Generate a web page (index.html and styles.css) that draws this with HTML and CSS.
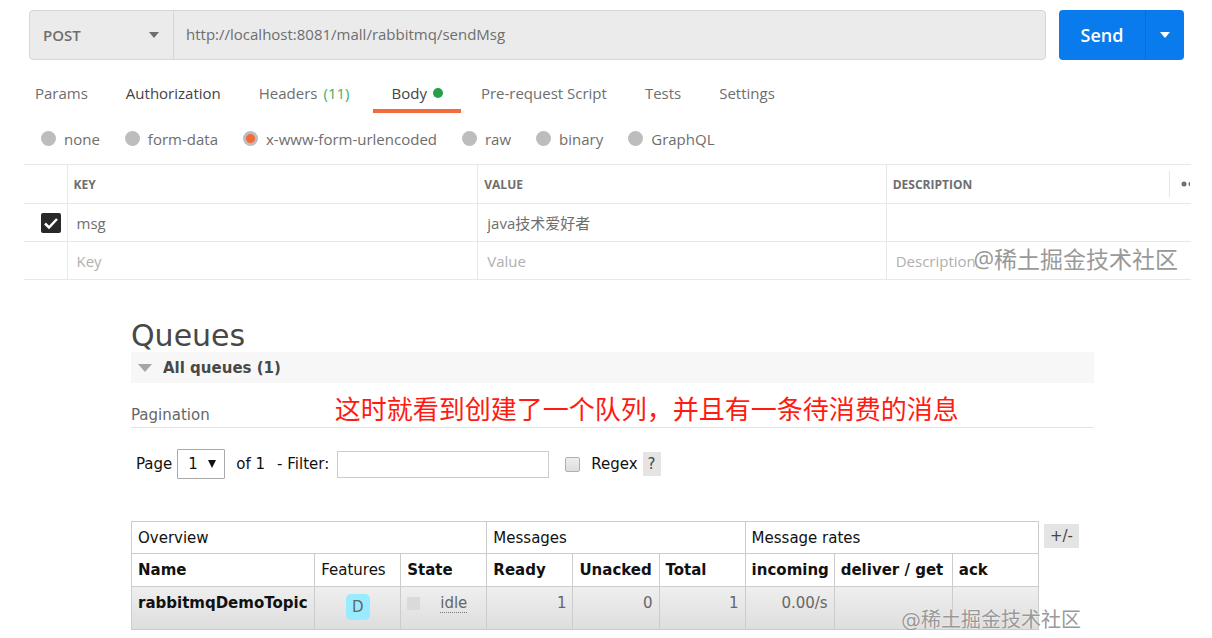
FILE: index.html
```
<!DOCTYPE html>
<html lang="zh-CN">
<head>
<meta charset="utf-8">
<title>RabbitMQ sendMsg</title>
<link rel="stylesheet" href="styles.css">
</head>
<body>
<section class="request">
  <form class="request-bar">
    <div class="request-target">
      <div class="method">
        <select class="method-select" aria-label="Method"><option>POST</option></select>
        <svg class="method-arrow" viewBox="0 0 10 6"><path d="M0 0h10L5 6z"/></svg>
      </div>
      <input class="url" type="text" aria-label="Request URL" value="http://localhost:8081/mall/rabbitmq/sendMsg">
    </div>
    <div class="send-group">
      <button class="send" type="button">Send</button>
      <button class="send-more" type="button" aria-label="Send options"><svg class="send-arrow" viewBox="0 0 10 6"><path d="M0 0h10L5 6z"/></svg></button>
    </div>
  </form>

  <nav class="tabs">
    <button class="tab" type="button">Params</button>
    <button class="tab tab-strong" type="button">Authorization</button>
    <button class="tab tab-headers" type="button">Headers <span class="count">(11)</span></button>
    <button class="tab tab-strong tab-active" type="button">Body <span class="dot"></span></button>
    <button class="tab" type="button">Pre-request Script</button>
    <button class="tab" type="button">Tests</button>
    <button class="tab" type="button">Settings</button>
  </nav>

  <div class="modes">
    <label class="mode"><input class="radio" type="radio" name="mode">none</label>
    <label class="mode"><input class="radio" type="radio" name="mode">form-data</label>
    <label class="mode"><input class="radio" type="radio" name="mode" checked>x-www-form-urlencoded</label>
    <label class="mode"><input class="radio" type="radio" name="mode">raw</label>
    <label class="mode"><input class="radio" type="radio" name="mode">binary</label>
    <label class="mode"><input class="radio" type="radio" name="mode">GraphQL</label>
  </div>

  <div class="params-wrap">
    <table class="params">
      <colgroup><col class="col-check"><col class="col-key"><col class="col-value"><col></colgroup>
      <thead>
        <tr><th></th><th>KEY</th><th>VALUE</th>
          <th><div class="description-head">DESCRIPTION<button class="more" type="button" aria-label="More"><svg class="more-dots" viewBox="0 0 9 6"><circle cx="3" cy="3" r="2.5"/><circle cx="10" cy="3" r="2.5"/></svg></button></div></th></tr>
      </thead>
      <tbody>
        <tr>
          <td class="check-cell"><span class="check"><input class="check-input" type="checkbox" aria-label="Enable msg" checked><svg class="check-mark" viewBox="0 0 20 20"><path d="M4 10.500l4 4 8-8.500"/></svg></span></td>
          <td><input class="cell" type="text" aria-label="Key" value="msg"></td>
          <td><input class="cell" type="text" aria-label="Value" value="java技术爱好者"></td>
          <td><input class="cell" type="text" aria-label="Description"></td>
        </tr>
        <tr>
          <td></td>
          <td><input class="cell" type="text" aria-label="New key" placeholder="Key"></td>
          <td><input class="cell" type="text" aria-label="New value" placeholder="Value"></td>
          <td><input class="cell" type="text" aria-label="New description" placeholder="Description"></td>
        </tr>
      </tbody>
    </table>
    <span class="watermark watermark-request">@稀土掘金技术社区</span>
  </div>
</section>

<main class="queues">
  <h1 class="title">Queues</h1>
  <h2 class="section-bar"><svg class="section-arrow" viewBox="0 0 14 8"><path d="M0 0h14L7 8z"/></svg>All queues (1)</h2>
  <div class="pagination">
    <h3 class="pagination-title">Pagination</h3>
    <p class="note">这时就看到创建了一个队列，并且有一条待消费的消息</p>
  </div>
  <form class="filter">
    <label for="page">Page</label>
    <span class="page">
      <select class="page-select" id="page"><option>1</option></select>
      <svg class="page-arrow" viewBox="0 0 8 8"><path d="M0 0h8L4 8z"/></svg>
    </span>
    <span class="page-total">of 1</span>
    <label class="filter-label" for="filter">- Filter:</label>
    <input class="filter-input" id="filter" type="text">
    <input class="regex" id="regex" type="checkbox">
    <label for="regex">Regex</label>
    <button class="chip" type="button">?</button>
  </form>
  <div class="list">
    <table class="queue-table">
      <colgroup><col class="w-name"><col class="w-std"><col class="w-std"><col class="w-std"><col class="w-std"><col class="w-std"><col class="w-in"><col class="w-get"><col class="w-std"></colgroup>
      <thead>
        <tr><th class="light group" colspan="3">Overview</th><th class="light group" colspan="3">Messages</th><th class="light group" colspan="3">Message rates</th></tr>
        <tr><th>Name</th><th class="light">Features</th><th>State</th><th>Ready</th><th>Unacked</th><th>Total</th><th>incoming</th><th>deliver / get</th><th>ack</th></tr>
      </thead>
      <tbody>
        <tr>
          <td><a class="queue-link" href="#">rabbitmqDemoTopic</a></td>
          <td class="center"><span class="durable">D</span></td>
          <td><span class="state"><span class="state-box"></span><abbr class="state-text">idle</abbr></span></td>
          <td class="num">1</td><td class="num">0</td><td class="num">1</td>
          <td class="num">0.00/s</td><td></td><td></td>
        </tr>
      </tbody>
    </table>
    <button class="chip chip-columns" type="button">+/-</button>
    <span class="watermark watermark-queues">@稀土掘金技术社区</span>
  </div>
</main>
</body>
</html>
```
FILE: styles.css
```
* { box-sizing: border-box; }

body {
  margin: 0;
  background: #fff;
  font-family: "Open Sans", "Noto Sans CJK SC", sans-serif;
  font-size: 15px;
  color: #6e6e6e;
}

button, input, select {
  font: inherit;
  color: inherit;
  margin: 0;
  padding: 0;
  border: 0;
  background: none;
  appearance: none;
  outline: 0;
}

svg { display: block; fill: currentColor; }

/* Request builder */
.request { padding: 10px 21px 0 24px; }

.request-bar {
  display: flex;
  gap: 13px;
  padding: 0 7px 0 5px;
}

.request-target {
  flex: 1;
  display: flex;
  height: 50px;
  border: 1px solid #d6d6d6;
  border-radius: 4px;
  background: #ebebeb;
}

.method {
  display: grid;
  width: 144px;
  align-items: center;
  border-right: 1px solid #d6d6d6;
}

.method-select {
  grid-area: 1 / 1;
  height: 48px;
  padding-left: 13px;
  font-weight: 600;
  font-size: 15px;
}

.method-arrow {
  grid-area: 1 / 1;
  justify-self: end;
  width: 10px;
  margin-right: 14px;
  pointer-events: none;
}

.url { flex: 1; padding: 0 12px 2px; }

.send-group {
  display: flex;
  border-radius: 4px;
  overflow: hidden;
  background: #097bed;
  color: #fff;
}

.send { width: 86px; font-size: 18px; font-weight: 600; }

.send-more {
  display: grid;
  place-items: center;
  width: 39px;
  border-left: 1px solid #0a6dd6;
}

.send-arrow { width: 10px; }

.tabs { display: flex; gap: 2px; margin-top: 14px; padding-left: 11px; margin-left: -18px; }

.tab {
  display: flex;
  align-items: center;
  gap: 6px;
  height: 39px;
  padding: 2px 18px 0;
  border-bottom: 4px solid transparent;
}

.tab-strong { color: #444; }
.tab-headers { padding-right: 22px; }
.tab-active { border-bottom-color: #f26b3a; }
.count { color: #3cb060; }

.dot {
  width: 10px;
  height: 10px;
  border-radius: 50%;
  background: #26a047;
}

.modes {
  display: flex;
  gap: 25px;
  height: 51px;
  align-items: center;
  padding-left: 17px;
}

.mode { display: flex; align-items: center; gap: 8px; }

.radio {
  width: 15px;
  height: 15px;
  border-radius: 50%;
  background: #bdbdbd;
}

.radio:checked { background: radial-gradient(circle, #f26b3a 4px, #bdbdbd 5px); }

.params-wrap { position: relative; }

.params {
  width: 100%;
  table-layout: fixed;
  border-collapse: collapse;
  border-top: 1px solid #e8e8e8;
}

.col-check { width: 43px; }
.col-key { width: 35.2%; }
.col-value { width: 35%; }

.params tr { height: 38px; border-bottom: 1px solid #e8e8e8; }
.params thead tr { height: 39px; }
.params th, .params td { padding: 0; border-left: 1px solid #e8e8e8; }
.params th:first-child, .params td:first-child { border-left: 0; }

.params th {
  padding-left: 6px;
  text-align: left;
  font-size: 12px;
  font-weight: 700;
}

.description-head { display: flex; align-items: center; justify-content: space-between; }

.more {
  width: 22px;
  height: 26px;
  padding-left: 11px;
  border-left: 1px solid #e8e8e8;
}

.more-dots { width: 9px; height: 6px; }

.cell { display: block; width: 100%; height: 36px; padding: 0 9px; }
.cell::placeholder { color: #b0b0b0; opacity: 1; }

.check { display: grid; width: 20px; margin-left: 17px; }
.check-input {
  grid-area: 1 / 1;
  width: 20px;
  height: 20px;
  border-radius: 2px;
  background: #282828;
}
.check-mark {
  grid-area: 1 / 1;
  width: 20px;
  fill: none;
  stroke: #fff;
  stroke-width: 2.5;
  pointer-events: none;
}

.watermark {
  position: absolute;
  white-space: nowrap;
  color: #999;
  text-shadow: 0 0 2px #fff;
  pointer-events: none;
}

.watermark-request { right: 13px; bottom: 5px; font-size: 23px; line-height: 32px; }
.watermark-queues { right: 13px; bottom: -5px; font-size: 20px; line-height: 30px; }

/* Queue management */
.queues {
  margin: 40px 118px 0 131px;
  font-family: "DejaVu Sans", "Noto Sans CJK SC", sans-serif;
  color: #111;
}

.title {
  margin: 0;
  font-size: 30px;
  line-height: 32px;
  font-weight: 400;
  color: #484848;
}

.section-bar {
  display: flex;
  align-items: center;
  gap: 11px;
  height: 31px;
  margin: 0;
  padding-left: 7px;
  background: #f7f7f7;
  font-size: 15px;
  color: #484848;
}

.section-arrow { width: 14px; color: #a6a6a6; }

.pagination {
  display: flex;
  align-items: center;
  gap: 125px;
  height: 45px;
  border-bottom: 1px solid #e4e4e4;
}

.pagination-title {
  margin: 0;
  padding-top: 20px;
  font-size: 15px;
  font-weight: 400;
  color: #666;
}

.note {
  margin: 0;
  padding-top: 6px;
  font-family: "Noto Sans CJK SC", sans-serif;
  font-size: 26px;
  line-height: 34px;
  white-space: nowrap;
  color: #ff1a12;
}

.filter {
  display: flex;
  align-items: center;
  margin-top: 21px;
  padding-left: 5px;
  font-size: 15px;
}

.page {
  display: grid;
  align-items: center;
  width: 48px;
  margin: 0 11px 0 5px;
}

.page-select {
  grid-area: 1 / 1;
  height: 30px;
  padding-left: 10px;
  border: 1px solid #a9a9a9;
  border-radius: 1px;
}

.page-arrow { grid-area: 1 / 1; justify-self: end; width: 8px; margin-right: 9px; pointer-events: none; }
.filter-label { margin: 0 8px 0 12px; }
.filter-input { width: 212px; height: 27px; border: 1px solid #ccc; padding: 0 6px; }

.regex {
  width: 15px;
  height: 15px;
  margin: 0 11px 0 16px;
  border: 1px solid #b0b0b0;
  border-radius: 2px;
  background: linear-gradient(#eee, #ddd);
}

.chip {
  height: 24px;
  padding: 0 5px;
  margin-left: 5px;
  background: #e4e4e4;
  color: #444;
}

.list {
  position: relative;
  display: flex;
  align-items: flex-start;
  margin-top: 42px;
}

.queue-table {
  table-layout: fixed;
  width: 908px;
  border-collapse: collapse;
  font-size: 15px;
}

.w-name { width: 183px; }
.w-std { width: 86px; }
.w-in { width: 89px; }
.w-get { width: 118px; }

.queue-table th, .queue-table td {
  height: 33px;
  padding: 0 6px;
  border: 1px solid #ccc;
  text-align: left;
  white-space: nowrap;
}

.queue-table .light { font-weight: 400; }
.queue-table .group { height: 32px; }

.queue-table td {
  height: 43px;
  padding-top: 7px;
  vertical-align: top;
  color: #666;
}
.queue-table tbody tr { background: linear-gradient(#efefef, #dddddd); }
.queue-table .num { text-align: right; }
.queue-table .center { text-align: center; }

.queue-link { color: #111; font-weight: 700; text-decoration: none; }

.durable {
  display: inline-block;
  padding: 0 6px;
  border-radius: 5px;
  background: #99ebff;
  line-height: 26px;
}

.state { display: flex; align-items: center; gap: 20px; }
.state-box { width: 13px; height: 13px; background: #dadada; }
.state-text { border-bottom: 1px dotted #777; line-height: 18px; }

.chip-columns { margin: 3px 0 0 5px; padding: 0 6px; }
```
